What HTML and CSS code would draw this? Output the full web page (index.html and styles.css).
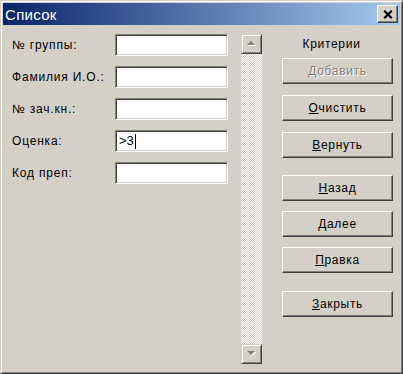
FILE: index.html
```html
<!DOCTYPE html>
<html>

<head>
    <link rel="stylesheet" href="styles.css">
    <title>Список</title>
</head>

<body>
    <div class="window">
        <div class="titlebar">
            <span class="title">Список</span>
            <div class="close">
                <svg width="10" height="9" viewBox="0 0 10 9">
                    <path d="M1.2 0.8 L8.8 8.2 M8.8 0.8 L1.2 8.2" stroke="#000" stroke-width="2.2" fill="none" />
                </svg>
            </div>
        </div>
        <div class="content">
            <div class="fields">
                <div class="row"><span class="label">№ группы:</span><div class="field"></div></div>
                <div class="row"><span class="label">Фамилия И.О.:</span><div class="field"></div></div>
                <div class="row"><span class="label">№ зач.кн.:</span><div class="field"></div></div>
                <div class="row"><span class="label">Оценка:</span><div class="field">&gt;3<span class="caret"></span></div></div>
                <div class="row"><span class="label">Код преп:</span><div class="field"></div></div>
            </div>
            <div class="scrollbar">
                <div class="scroll-btn">
                    <svg width="9" height="6" viewBox="0 0 9 6">
                        <polygon points="5,1 9,5 1,5" fill="#fff" />
                        <polygon points="4,0 8,4 0,4" fill="#808080" />
                    </svg>
                </div>
                <div class="track"></div>
                <div class="scroll-btn">
                    <svg width="9" height="6" viewBox="0 0 9 6">
                        <polygon points="1,1 9,1 5,5" fill="#fff" />
                        <polygon points="0,0 8,0 4,4" fill="#808080" />
                    </svg>
                </div>
            </div>
            <div class="actions">
                <div class="criteria">Критерии</div>
                <div class="group">
                    <div class="btn disabled">Добавить</div>
                    <div class="btn"><u>О</u>чистить</div>
                    <div class="btn"><u>В</u>ернуть</div>
                </div>
                <div class="group nav">
                    <div class="btn"><u>Н</u>азад</div>
                    <div class="btn"><u>Д</u>алее</div>
                    <div class="btn"><u>П</u>равка</div>
                </div>
                <div class="group last">
                    <div class="btn"><u>З</u>акрыть</div>
                </div>
            </div>
        </div>
    </div>
</body>

</html>
```

FILE: styles.css
```css
html {
    font-family: "Liberation Sans", Arial, sans-serif;
}

body {
    margin: 0;
    background: #D4D0C8;
}

.window {
    width: 403px;
    height: 374px;
    box-sizing: border-box;
    border: 1px solid;
    border-color: #D4D0C8 #404040 #404040 #D4D0C8;
    box-shadow: inset 1px 1px #FFFFFF, inset -1px -1px #808080;
    padding: 2px;
    background: #D4D0C8;
}

.titlebar {
    height: 22px;
    display: flex;
    align-items: center;
    justify-content: space-between;
    padding: 0 2px;
    background: linear-gradient(to right, #0A246A, #A6CAF0);
}

.title {
    color: #FFFFFF;
    font-size: 15px;
    letter-spacing: 0.3px;
}

.close {
    width: 21px;
    height: 18px;
    box-sizing: border-box;
    display: flex;
    align-items: center;
    justify-content: center;
    background: #D4D0C8;
    border: 1px solid;
    border-color: #FFFFFF #404040 #404040 #FFFFFF;
    box-shadow: inset -1px -1px #808080;
}

.content {
    display: flex;
    padding: 9px 0 0 9px;
}

.fields {
    display: flex;
    flex-direction: column;
    gap: 10px;
}

.row {
    display: flex;
    align-items: center;
    height: 22px;
}

.label {
    width: 103px;
    font-size: 12px;
    letter-spacing: 0.8px;
    color: #000;
}

.field {
    width: 113px;
    height: 22px;
    box-sizing: border-box;
    background: #FFFFFF;
    border: 1px solid;
    border-color: #808080 #FFFFFF #FFFFFF #808080;
    box-shadow: inset 1px 1px #404040, inset -1px -1px #D4D0C8;
    padding: 0 3px;
    font-size: 13px;
    line-height: 20px;
    display: flex;
    align-items: center;
}

.caret {
    display: inline-block;
    width: 1px;
    height: 15px;
    background: #000;
    margin-left: 1px;
}

.scrollbar {
    margin-left: 13px;
    width: 21px;
    height: 330px;
    display: flex;
    flex-direction: column;
}

.scroll-btn {
    height: 20px;
    box-sizing: border-box;
    display: flex;
    align-items: center;
    justify-content: center;
    background: #D4D0C8;
    border: 1px solid;
    border-color: #D4D0C8 #404040 #404040 #D4D0C8;
    box-shadow: inset 1px 1px #FFFFFF, inset -1px -1px #808080;
}

.track {
    flex: 1;
    background-color: #D4D0C8;
    background-image: conic-gradient(#FFFFFF 25%, #D4D0C8 0 50%, #FFFFFF 0 75%, #D4D0C8 0);
    background-size: 2px 2px;
}

.actions {
    margin-left: 20px;
    width: 111px;
}

.criteria {
    height: 24px;
    line-height: 20px;
    text-align: center;
    padding-right: 12px;
    font-size: 12px;
    letter-spacing: 0.7px;
}

.group {
    display: flex;
    flex-direction: column;
    gap: 11px;
}

.group.nav {
    margin-top: 17px;
    gap: 10px;
}

.group.last {
    margin-top: 18px;
}

.btn {
    height: 26px;
    box-sizing: border-box;
    border: 1px solid;
    border-color: #FFFFFF #404040 #404040 #FFFFFF;
    box-shadow: inset -1px -1px #808080;
    display: flex;
    align-items: center;
    justify-content: center;
    font-size: 12px;
    letter-spacing: 0.7px;
    color: #000;
}

.btn.disabled {
    color: #808080;
    text-shadow: 1px 1px #FFFFFF;
}
```
